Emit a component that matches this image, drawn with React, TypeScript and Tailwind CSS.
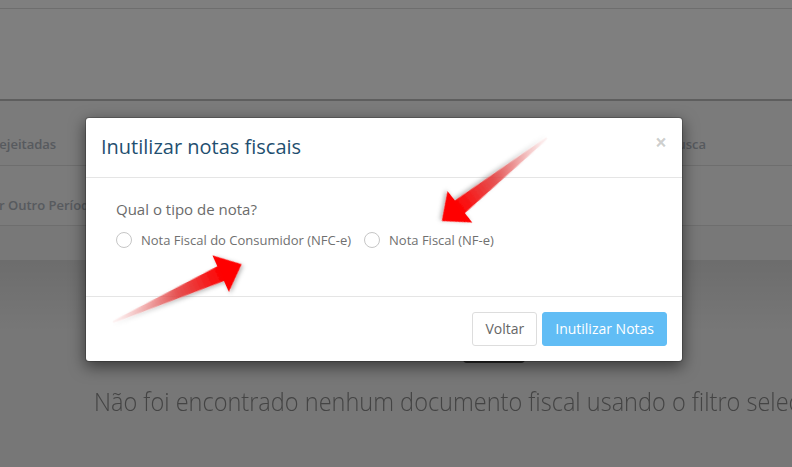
import React from 'react'

type ArrowProps = { id: string; x: number; y: number; angle: number; len: number }

function Arrow({ id, x, y, angle, len }: ArrowProps) {
  const h = 23
  const w = 20
  const s = 8
  const b = len - h
  const pts = `0,-1 ${b},-${s} ${b},-${w} ${len},0 ${b},${w} ${b},${s} 0,1`
  return (
    <g transform={`translate(${x} ${y}) rotate(${angle})`}>
      <defs>
        <linearGradient id={id} gradientUnits="userSpaceOnUse" x1="0" y1="0" x2={len} y2="0">
          <stop offset="0" stopColor="#f08a8a" stopOpacity="0.08" />
          <stop offset="0.5" stopColor="#e63c3c" stopOpacity="0.85" />
          <stop offset="0.85" stopColor="#ff0000" />
        </linearGradient>
      </defs>
      <polygon points={pts} fill={`url(#${id})`} filter="url(#arrowShadow)" />
    </g>
  )
}

function Arrows() {
  return (
    <svg className="pointer-events-none absolute inset-0" width="792" height="467" viewBox="0 0 792 467">
      <defs>
        <filter id="arrowShadow" x="-20%" y="-20%" width="140%" height="140%">
          <feDropShadow dx="1" dy="2" stdDeviation="2" floodColor="#000" floodOpacity="0.3" />
        </filter>
      </defs>
      <Arrow id="arrowA" x={113} y={322} angle={-24.2} len={141} />
      <Arrow id="arrowB" x={547} y={138} angle={141.7} len={134} />
    </svg>
  )
}

function Page() {
  return (
    <div className="flex flex-col">
      <div className="h-[9px] bg-white border-b border-[#dcdcdc]" />
      <div className="h-[92px] bg-white border-b-2 border-[#bcbcbc]" />
      <div className="flex h-[65px] border-b border-[#dcdcdc] bg-[#f6f6f6] pt-[33px] text-[13px] font-semibold leading-[20px] text-[#aeb4bd]">
        <span className="ml-[-9px]">Rejeitadas</span>
        <span className="ml-auto mr-[86px]">Busca</span>
      </div>
      <div className="flex h-[60px] border-b border-[#dcdcdc] bg-[#f6f6f6] pt-[29px] text-[13px] font-semibold leading-[20px] text-[#aeb4bd]">
        <span className="ml-[-17px]">Por Outro Período</span>
      </div>
      <div className="h-[34px] bg-[#f1f1f1]" />
      <div className="h-[70px] bg-gradient-to-b from-[#dadada] to-[#eeeeee]" />
      <div className="flex">
        <div className="ml-[463px] h-[33px] w-[62px] rounded-[4px] bg-[#565656]" />
      </div>
      <div className="mt-[20px] pl-[94px]">
        <p className="origin-left scale-x-[0.905] whitespace-nowrap text-[26px] font-light leading-[36px] text-[#888888]">
          Não foi encontrado nenhum documento fiscal usando o filtro selecionado
        </p>
      </div>
    </div>
  )
}

function Radio({ label }: { label: string }) {
  return (
    <label className="flex items-center">
      <span className="h-4 w-4 rounded-full border border-[#c6c6c6] bg-white" />
      <span className="ml-[9px] text-[13px] leading-[20px] text-[#707070]">{label}</span>
    </label>
  )
}

function Modal() {
  return (
    <div className="absolute left-[85px] top-[117px] w-[598px] rounded-[4px] border border-black/20 bg-white bg-clip-padding shadow-[0_5px_15px_rgba(0,0,0,0.5)]">
      <div className="flex items-start justify-between border-b border-[#e5e5e5] p-[15px]">
        <h4 className="text-[20px] leading-[1.42857] text-[#1f4f70]">Inutilizar notas fiscais</h4>
        <button className="mt-[-1px] text-[21px] font-bold leading-none text-black/20">×</button>
      </div>
      <div className="px-[30px] pt-[20px] pb-[46px]">
        <p className="text-[15px] leading-[22px] text-[#6b6b6b]">Qual o tipo de nota?</p>
        <div className="mt-[10px] flex gap-[13px]">
          <Radio label="Nota Fiscal do Consumidor (NFC-e)" />
          <Radio label="Nota Fiscal (NF-e)" />
        </div>
      </div>
      <div className="flex justify-end gap-[5px] border-t border-[#e5e5e5] p-[15px]">
        <button className="h-[34px] rounded-[3px] border border-[#dddddd] bg-white px-[12px] text-[14px] text-[#666666]">
          Voltar
        </button>
        <button className="h-[34px] rounded-[3px] border border-[#61bdf5] bg-[#61bdf5] px-[12px] text-[14px] text-white">
          Inutilizar Notas
        </button>
      </div>
    </div>
  )
}

export default function App() {
  return (
    <div className="relative h-[467px] w-[792px] overflow-hidden bg-[#eeeeee] font-['Open_Sans',sans-serif]">
      <Page />
      <div className="absolute inset-0 bg-black/50" />
      <Modal />
      <Arrows />
    </div>
  )
}
